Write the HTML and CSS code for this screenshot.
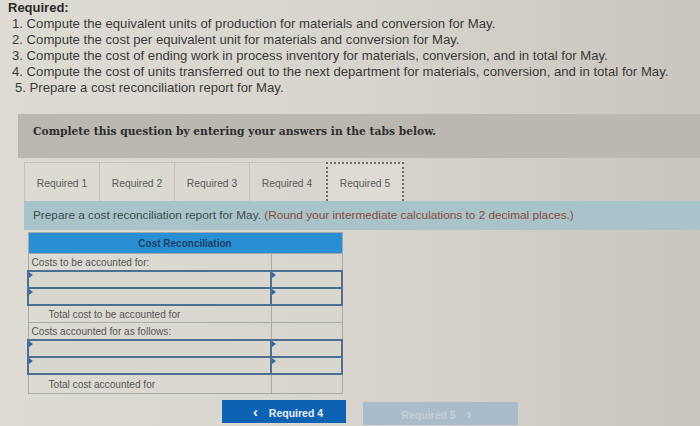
FILE: index.html
```html
<!DOCTYPE html>
<html>
<head>
<meta charset="utf-8">
<link rel="stylesheet" href="styles.css">
</head>
<body>
<div class="page">
  <div class="required">
    <div class="req-title">Required:</div>
    <div>1. Compute the equivalent units of production for materials and conversion for May.</div>
    <div>2. Compute the cost per equivalent unit for materials and conversion for May.</div>
    <div>3. Compute the cost of ending work in process inventory for materials, conversion, and in total for May.</div>
    <div>4. Compute the cost of units transferred out to the next department for materials, conversion, and in total for May.</div>
    <div class="last">5. Prepare a cost reconciliation report for May.</div>
  </div>

  <div class="question">
    <div class="banner">Complete this question by entering your answers in the tabs below.</div>
    <div class="work">
      <div class="tabs">
        <div class="tab">Required 1</div>
        <div class="tab">Required 2</div>
        <div class="tab">Required 3</div>
        <div class="tab">Required 4</div>
        <div class="tab active">Required 5</div>
      </div>
      <div class="instr">Prepare a cost reconciliation report for May. <span class="round">(Round your intermediate calculations to 2 decimal places.)</span></div>

      <table class="recon">
        <colgroup><col class="col1"><col class="col2"></colgroup>
        <tr><th colspan="2">Cost Reconciliation</th></tr>
        <tr class="label"><td>Costs to be accounted for:</td><td></td></tr>
        <tr class="input"><td><span class="mark"></span></td><td><span class="mark"></span></td></tr>
        <tr class="input"><td><span class="mark"></span></td><td><span class="mark"></span></td></tr>
        <tr class="label total"><td>Total cost to be accounted for</td><td></td></tr>
        <tr class="label"><td>Costs accounted for as follows:</td><td></td></tr>
        <tr class="input"><td><span class="mark"></span></td><td><span class="mark"></span></td></tr>
        <tr class="input"><td><span class="mark"></span></td><td><span class="mark"></span></td></tr>
        <tr class="label total tall"><td>Total cost accounted for</td><td></td></tr>
      </table>

      <div class="nav">
        <button class="btn prev"><span class="chev">&lsaquo;</span> Required 4</button>
        <button class="btn next">Required 5 <span class="chev">&rsaquo;</span></button>
      </div>
    </div>
  </div>
</div>
</body>
</html>
```

FILE: styles.css
```css
html, body {
  margin: 0;
  padding: 0;
}
body {
  width: 700px;
  height: 426px;
  overflow: hidden;
  background: linear-gradient(90deg, #dedbd4 0%, #d8d5ce 50%, #cac6bf 100%);
  font-family: "Liberation Sans", Arial, sans-serif;
}
.page {
  display: flex;
  flex-direction: column;
}
.required {
  padding: 0 0 0 12px;
  font-size: 13.15px;
  line-height: 16px;
  color: #3a3a3a;
}
.req-title {
  font-weight: bold;
  color: #2a2a2a;
  margin-left: -4px;
  font-size: 13px;
}
.last {
  padding-left: 3px;
}
.question {
  margin-top: 18px;
  margin-left: 18px;
}
.banner {
  background: #bbb8b2;
  height: 44px;
  line-height: 36px;
  padding-left: 15px;
  font-family: "DejaVu Serif", "Liberation Serif", serif;
  font-weight: bold;
  font-size: 10.7px;
  color: #2e2e2e;
}
.work {
  padding-left: 6px;
  margin-top: 4px;
}
.tabs {
  display: flex;
  height: 39px;
}
.tab {
  width: 75px;
  border: 1px solid #c6c3bd;
  border-bottom: none;
  border-right: none;
  box-sizing: border-box;
  display: flex;
  align-items: center;
  justify-content: center;
  font-size: 10.3px;
  color: #5a5a5a;
  padding-top: 2px;
}
.tab.active {
  width: 78px;
  border: 2px dotted #6e6c68;
  border-bottom: none;
  background: #dedbd4;
  margin-left: 2px;
}
.instr {
  background: #a9c4c9;
  height: 29px;
  line-height: 29px;
  padding-left: 9px;
  font-size: 11.8px;
  color: #3d4a4e;
}
.round {
  color: #8a4a3c;
}
.recon {
  margin-top: 2px;
  margin-left: 3px;
  border-collapse: collapse;
  table-layout: fixed;
  width: 314px;
  font-size: 10.1px;
  color: #555;
}
.col1 {
  width: 243px;
}
.col2 {
  width: 71px;
}
.recon th {
  background: #2a8ed2;
  color: #1c3f66;
  font-weight: bold;
  font-size: 10px;
  height: 20px;
  padding: 0;
  border: 1px solid #a0a8ad;
}
.recon td {
  padding: 0;
  border: 1px solid #a9aaa6;
  position: relative;
}
.recon tr.label td {
  height: 16px;
}
.recon tr.label td:first-child {
  padding-left: 3px;
}
.recon tr.total td:first-child {
  padding-left: 20px;
}
.recon tr.tall td {
  height: 18px;
}
.recon tr.input td {
  height: 15px;
  border: 2px solid #4f6f92;
  background: #d9d6d0;
}
.mark {
  position: absolute;
  left: 0;
  top: 0;
  width: 0;
  height: 0;
  border-top: 3px solid transparent;
  border-bottom: 3px solid transparent;
  border-left: 4px solid #2f6aa8;
}
.nav {
  display: flex;
  gap: 17px;
  margin-top: 6px;
  margin-left: 198px;
}
.btn {
  border: none;
  height: 23px;
  font-family: "Liberation Sans", Arial, sans-serif;
  font-weight: bold;
  font-size: 10.5px;
  padding: 0;
}
.btn.prev {
  width: 124px;
  background: #0e62b4;
  color: #e8eef6;
}
.btn.next {
  width: 155px;
  background: #a8bccb;
  color: #c2d0da;
  margin-top: 2px;
}
.chev {
  font-size: 15px;
  margin: 0 8px;
}
```
